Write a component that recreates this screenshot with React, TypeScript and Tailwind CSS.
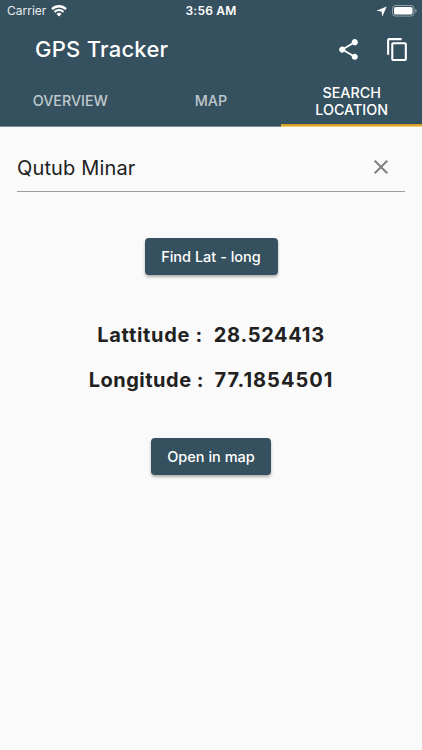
import React, { useState } from 'react';
import { MdClose, MdContentCopy, MdShare } from 'react-icons/md';

const tabs = ['OVERVIEW', 'MAP', 'SEARCH LOCATION'];

const StatusBar: React.FC = () => (
  <div className="grid h-[22px] grid-cols-3 items-center pl-[7px] pr-[5px] text-[12px] leading-[22px]">
    <div className="flex items-center gap-[5px]">
      <span className="text-white/90">Carrier</span>
      <svg width="16" height="12" viewBox="0 0 16 12" fill="none" stroke="currentColor">
        <path d="M1 4.1a10 10 0 0 1 14 0" strokeWidth="2.3" />
        <path d="M3.5 6.9a6.3 6.3 0 0 1 9 0" strokeWidth="2.1" />
        <path d="M8 11.6 5.5 9.1a3.5 3.5 0 0 1 5 0Z" fill="currentColor" stroke="none" />
      </svg>
    </div>
    <span className="-ml-[2px] text-center font-semibold tracking-[0.2px]">3:56 AM</span>
    <div className="flex items-center justify-end gap-[5px]">
      <svg width="11" height="11" viewBox="0 0 10 10" fill="currentColor">
        <path d="M9.7.4 5.7 9.7 5 5.1.4 4.4Z" />
      </svg>
      <svg width="25" height="12" viewBox="0 0 25 12" fill="none">
        <rect x="0.5" y="0.5" width="21.5" height="10.6" rx="3" stroke="white" strokeOpacity="0.45" />
        <rect x="2" y="2" width="18.5" height="7.6" rx="1.6" fill="white" />
        <path d="M23.3 4v3.7c.8-.3 1.3-1 1.3-1.8s-.5-1.6-1.3-1.9Z" fill="white" fillOpacity="0.5" />
      </svg>
    </div>
  </div>
);

interface RaisedButtonProps {
  label: string;
  className: string;
}

const RaisedButton: React.FC<RaisedButtonProps> = ({ label, className }) => (
  <button
    className={`h-[37px] rounded-[4px] bg-[#35505e] text-[14.5px] font-medium text-white shadow-[0_2px_3px_rgba(0,0,0,0.3)] ${className}`}
  >
    {label}
  </button>
);

const App: React.FC = () => {
  const [activeTab, setActiveTab] = useState(2);
  const [query, setQuery] = useState('Qutub Minar');

  return (
    <div className="min-h-screen bg-[#fafafa] font-['Inter','Liberation_Sans',sans-serif] text-[#212121] [font-feature-settings:'calt'_0]">
      {/* App bar */}
      <header className="bg-[#35505e] text-white">
        <StatusBar />
        <div className="flex h-[54px] items-center pl-[35px] pr-[12px]">
          <h1 className="flex-1 text-[22px] font-medium tracking-[0.25px]">GPS Tracker</h1>
          <button aria-label="Share" className="mr-[24px]">
            <MdShare size={25} />
          </button>
          <button aria-label="Copy">
            <MdContentCopy size={25} />
          </button>
        </div>
        <nav className="grid h-[51px] grid-cols-3 border-b border-[#7d8b93]">
          {tabs.map((tab, i) => (
            <button
              key={tab}
              onClick={() => setActiveTab(i)}
              className={`-mb-px border-b px-6 pb-px text-[14.3px] font-medium leading-[17px] ${
                i === activeTab
                  ? 'border-[#f3d280] text-white shadow-[inset_0_-2px_0_#d6a125]'
                  : 'border-transparent text-white/70'
              }`}
            >
              {tab}
            </button>
          ))}
        </nav>
      </header>

      {/* Search location */}
      <main className="px-[17px] pt-[16px]">
        <div className="flex h-[49px] items-center border-b border-[#9b9b9b] pr-[12px]">
          <input
            value={query}
            onChange={(e) => setQuery(e.target.value)}
            className="min-w-0 flex-1 bg-transparent pt-px text-[20px] tracking-[0.15px] outline-none"
          />
          <button aria-label="Clear" onClick={() => setQuery('')} className="text-[#808080]">
            <MdClose size={24} />
          </button>
        </div>

        <div className="flex flex-col items-center pt-[46px]">
          <RaisedButton label="Find Lat - long" className="w-[133px]" />
          <div className="mt-[45px] flex flex-col items-center gap-[15px] text-[20px] font-bold leading-[30px]">
            <p className="whitespace-pre tracking-[0.7px]">{'Lattitude :  28.524413'}</p>
            <p className="whitespace-pre tracking-[0.5px]">
              {'Longitude :  '}
              <span className="tracking-[1px]">77.1854501</span>
            </p>
          </div>
          <RaisedButton label="Open in map" className="mt-[43px] w-[120px]" />
        </div>
      </main>
    </div>
  );
};

export default App;
